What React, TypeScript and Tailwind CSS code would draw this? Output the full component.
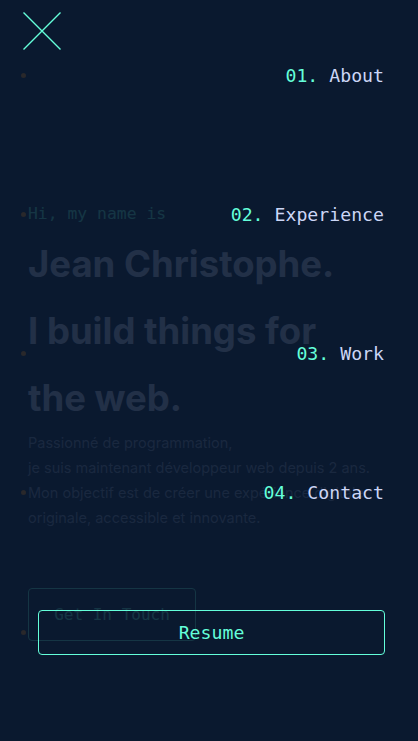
import React from "react";

const mono = { fontFamily: '"DejaVu Sans Mono", "Liberation Mono", monospace' };
const sans = { fontFamily: 'Inter, "Noto Sans", sans-serif' };

const items = [
  { n: "01.", label: "About" },
  { n: "02.", label: "Experience" },
  { n: "03.", label: "Work" },
  { n: "04.", label: "Contact" },
];

function Dot() {
  return <span className="block w-[5px] h-[5px] rounded-full bg-[#29282b] shrink-0" />;
}

export default function App() {
  return (
    <div className="relative w-full min-h-[741px] bg-[#0a192f] overflow-hidden">
      {/* hero behind the menu */}
      <div className="opacity-[0.12] pt-[202px] px-[28px]">
        <p className="text-[#64ffda] text-[16.4px] leading-[24px]" style={mono}>
          Hi, my name is
        </p>
        <h1
          className="mt-[5px] text-[#ccd6f6] text-[36.5px] leading-[67px] font-bold"
          style={sans}
        >
          Jean Christophe.
          <br />
          I build things for
          <br />
          the web.
        </h1>
        <p className="-mt-[2px] text-[#8892b0] text-[14.5px] leading-[25px]" style={sans}>
          Passionné de programmation,
          <br />
          je suis maintenant développeur web depuis 2 ans.
          <br />
          Mon objectif est de créer une expérience digitale
          <br />
          originale, accessible et innovante.
        </p>
        <button
          className="mt-[58px] w-[168px] h-[53px] border border-[#64ffda] rounded-[4px] text-[#64ffda] text-[16px]"
          style={mono}
        >
          Get In Touch
        </button>
      </div>

      {/* close icon */}
      <svg
        className="absolute left-[23px] top-[12px]"
        width="38"
        height="38"
        viewBox="0 0 38 38"
        fill="none"
      >
        <path d="M0.5 0.5 L37.5 37.5 M37.5 0.5 L0.5 37.5" stroke="#64ffda" strokeWidth="1.4" />
      </svg>

      {/* menu overlay */}
      <nav className="absolute left-0 right-0 top-[73px]">
        <ul>
          {items.map((it, i) => (
            <li
              key={it.n}
              className={`flex items-center justify-between pl-[21px] pr-[34px] ${i === 0 ? "" : "mt-[134px]"} h-[5px]`}
            >
              <Dot />
              <a className="text-[18.2px] leading-[24px] whitespace-nowrap" style={mono}>
                <span className="text-[#64ffda]">{it.n}</span>
                <span className="text-[#ccd6f6]"> {it.label}</span>
              </a>
            </li>
          ))}
          <li className="flex items-center gap-[12px] pl-[21px] pr-[33px] mt-[135px] h-[5px]">
            <Dot />
            <a
              className="flex-1 h-[45px] flex items-center justify-center border border-[#64ffda] rounded-[4px] text-[#64ffda] text-[18.2px]"
              style={mono}
            >
              Resume
            </a>
          </li>
        </ul>
      </nav>
    </div>
  );
}
